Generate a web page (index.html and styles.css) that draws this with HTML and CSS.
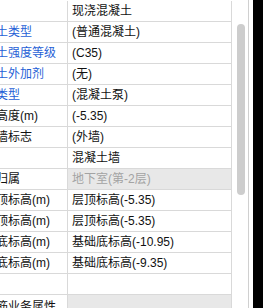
FILE: index.html
```html
<!DOCTYPE html>
<html lang="zh-CN">
<head>
    <meta charset="UTF-8">
    <title>属性编辑</title>
    <link rel="stylesheet" href="styles.css">
</head>
<body>
    <div class="panel">
        <!-- 属性表 -->
        <div class="grid">
            <div class="row"><div class="name"></div><div class="value">现浇混凝土</div></div>
            <div class="row"><div class="name link">混凝土类型</div><div class="value">(普通混凝土)</div></div>
            <div class="row"><div class="name link">混凝土强度等级</div><div class="value">(C35)</div></div>
            <div class="row"><div class="name link">混凝土外加剂</div><div class="value">(无)</div></div>
            <div class="row"><div class="name link">泵送类型</div><div class="value">(混凝土泵)</div></div>
            <div class="row"><div class="name">泵送高度(m)</div><div class="value">(-5.35)</div></div>
            <div class="row"><div class="name">内外墙标志</div><div class="value">(外墙)</div></div>
            <div class="row"><div class="name"></div><div class="value">混凝土墙</div></div>
            <div class="row"><div class="name">楼层归属</div><div class="value locked">地下室(第-2层)</div></div>
            <div class="row"><div class="name">起点顶标高(m)</div><div class="value">层顶标高(-5.35)</div></div>
            <div class="row"><div class="name">终点顶标高(m)</div><div class="value">层顶标高(-5.35)</div></div>
            <div class="row"><div class="name">起点底标高(m)</div><div class="value">基础底标高(-10.95)</div></div>
            <div class="row"><div class="name">终点底标高(m)</div><div class="value">基础底标高(-9.35)</div></div>
            <div class="row"><div class="name"></div><div class="value"></div></div>
            <div class="row group"><div class="name">钢筋业务属性</div><div class="value"></div></div>
        </div>

        <!-- 滚动条 -->
        <div class="scroll">
            <div class="thumb"></div>
        </div>
        <div class="gap"></div>
        <div class="edge"></div>
    </div>
</body>
</html>
```

FILE: styles.css
```css
body {
    margin: 0;
    background-color: #fff;
    font-family: "Liberation Sans", "Noto Sans CJK SC", sans-serif;
    font-size: 12px;
    color: #111;
}

.panel {
    display: flex;
    height: 308px;
    overflow: hidden;
}

/* 属性表 */
.grid {
    width: 232px;
    flex-shrink: 0;
    padding-top: 1px;
    overflow: hidden;
}

.row {
    display: flex;
    height: 20px;
    border-bottom: 1px solid #d9d9d9;
}

.name {
    width: 67px;
    flex-shrink: 0;
    border-right: 1px solid #d9d9d9;
    overflow: hidden;
    white-space: nowrap;
    line-height: 20px;
    text-indent: -28px;
}

.name.link {
    color: #1f5fd6;
}

.value {
    width: 159px;
    border-right: 1px solid #d9d9d9;
    padding-left: 4px;
    line-height: 20px;
    white-space: nowrap;
    overflow: hidden;
}

.value.locked {
    background-color: #e8e8e8;
    color: #a3a3a3;
}

.group .name {
    text-indent: -16px;
    line-height: 24px;
}

.group .value {
    background-color: #e8e8e8;
}

/* 滚动条 */
.scroll {
    width: 11px;
    flex-shrink: 0;
    padding-left: 5px;
    padding-top: 24px;
    border-right: 1px solid #d0d0d0;
}

.thumb {
    width: 8px;
    height: 171px;
    border-radius: 4px;
    background-color: #cdcdcd;
}

.gap {
    width: 4px;
    flex-shrink: 0;
}

.edge {
    flex-grow: 1;
    background-color: #000;
}
```
